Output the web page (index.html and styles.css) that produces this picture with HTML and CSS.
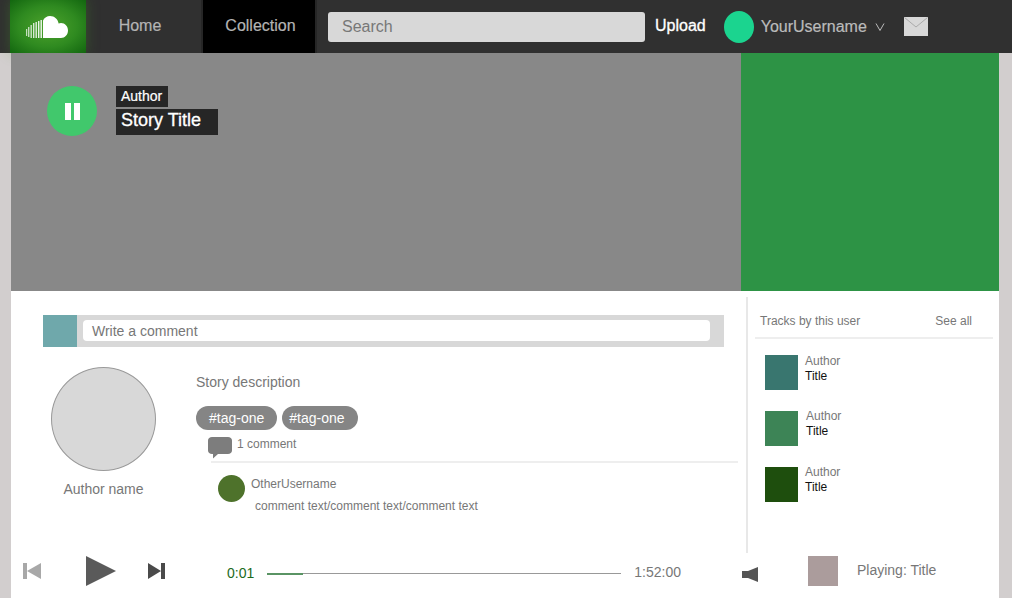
FILE: index.html
```html
<!DOCTYPE html>
<html lang="en">
<head>
    <meta charset="UTF-8">
    <title>Story</title>
    <link rel="stylesheet" href="styles.css">
</head>
<body>
    <nav class="nav">
        <div class="logo">
            <svg width="44" height="24" viewBox="0 0 44 24">
                <g fill="#fff">
                    <rect x="0" y="13" width="1.200" height="7" opacity=".7"/>
                    <rect x="2" y="11" width="1.400" height="10" opacity=".7"/>
                    <rect x="4.500" y="9" width="1.400" height="13" opacity=".75"/>
                    <rect x="7" y="7" width="1.400" height="15" opacity=".8"/>
                    <rect x="9.500" y="6" width="1.400" height="16" opacity=".85"/>
                    <rect x="12" y="5" width="1.400" height="17" opacity=".9"/>
                    <rect x="14.500" y="4" width="1.400" height="18" opacity=".95"/>
                    <path d="M17 22V4.500C18.500 1.500 21 0 24 0c4.500 0 8 3.200 8.600 7.600C33.300 7.200 34.200 7 35 7c3.900 0 7 3.300 7 7.500S38.900 22 35 22z"/>
                </g>
            </svg>
        </div>
        <a class="nav-link nav-home">Home</a>
        <a class="nav-link nav-active">Collection</a>
        <div class="search">Search</div>
        <a class="upload">Upload</a>
        <span class="user-dot"></span>
        <span class="username">YourUsername</span>
        <svg class="chevron" width="10" height="8" viewBox="0 0 10 8"><path d="M1 .5 5 7.500 9 .5" fill="none" stroke="#bbb"/></svg>
        <svg class="mail" width="24" height="19" viewBox="0 0 24 19">
            <rect width="24" height="19" fill="#d8d8d8"/>
            <path d="M.5.500 12 10 23.500.500" fill="none" stroke="#aaa"/>
        </svg>
    </nav>

    <main class="page">
        <section class="hero">
            <div class="hero-main">
                <div class="pause"><span></span><span></span></div>
                <div class="hero-labels">
                    <span class="hero-author">Author</span>
                    <span class="hero-title">Story Title</span>
                </div>
            </div>
            <div class="hero-side"></div>
        </section>

        <section class="content">
            <div class="story">
                <div class="write">
                    <span class="write-pic"></span>
                    <div class="write-input">Write a comment</div>
                </div>
                <div class="story-body">
                    <div class="author">
                        <div class="author-pic"></div>
                        <p class="author-name">Author name</p>
                    </div>
                    <div class="details">
                        <p class="description">Story description</p>
                        <div class="tags">
                            <span class="tag">#tag-one</span>
                            <span class="tag">#tag-one</span>
                        </div>
                        <div class="count">
                            <svg width="24" height="22" viewBox="0 0 24 22">
                                <path d="M4 0h16c2.200 0 4 1.500 4 3.500v10c0 2-1.800 3.500-4 3.500H10l-5 4.500V17H4c-2.200 0-4-1.500-4-3.500v-10C0 1.500 1.800 0 4 0z" fill="#7d7d7d"/>
                            </svg>
                            <span>1 comment</span>
                        </div>
                        <div class="comment">
                            <span class="comment-pic"></span>
                            <div>
                                <p class="comment-user">OtherUsername</p>
                                <p class="comment-text">comment text/comment text/comment text</p>
                            </div>
                        </div>
                    </div>
                </div>
            </div>

            <aside class="side">
                <div class="side-head">
                    <span>Tracks by this user</span>
                    <span>See all</span>
                </div>
                <div class="track">
                    <span class="cover cover-a"></span>
                    <div><p class="track-author">Author</p><p class="track-title">Title</p></div>
                </div>
                <div class="track track-wide">
                    <span class="cover cover-b"></span>
                    <div><p class="track-author">Author</p><p class="track-title">Title</p></div>
                </div>
                <div class="track">
                    <span class="cover cover-c"></span>
                    <div><p class="track-author">Author</p><p class="track-title">Title</p></div>
                </div>
            </aside>
        </section>

        <footer class="player">
            <svg class="prev" width="18" height="16" viewBox="0 0 18 16"><path d="M0 0h4v16H0zM4 8l14-8v16z" fill="#a8a8a8"/></svg>
            <svg class="play" width="30" height="30" viewBox="0 0 30 30"><path d="M0 0l30 15L0 30z" fill="#5a5a5a"/></svg>
            <svg class="next" width="17" height="16" viewBox="0 0 17 16"><path d="M0 0l13 8-13 8zM13 0h4v16h-4z" fill="#4a4a4a"/></svg>
            <span class="time-now">0:01</span>
            <div class="bar"><div class="bar-done"></div></div>
            <span class="time-all">1:52:00</span>
            <svg class="speaker" width="16" height="15" viewBox="0 0 16 15"><path d="M0 4h6l10-4v15L6 11H0z" fill="#555"/></svg>
            <span class="now-pic"></span>
            <span class="now-title">Playing: Title</span>
        </footer>
    </main>
</body>
</html>
```

FILE: styles.css
```css
*{
    box-sizing: border-box;
}
html, body{
    height: 598px;
    overflow: hidden;
}
body{
    margin: 0;
    background: #d2cece;
    font-family: "Liberation Sans", Arial, sans-serif;
    color: #777;
}
p{
    margin: 0;
}

.nav{
    height: 53px;
    background: #303030;
    display: flex;
    align-items: center;
    padding-left: 10px;
}
.logo{
    width: 76px;
    height: 53px;
    background: radial-gradient(ellipse at center, #4da32c 0%, #2f8a20 55%, #12660f 100%);
    box-shadow: 0 0 12px rgba(70, 150, 40, .35);
    display: flex;
    align-items: center;
    padding: 3px 0 0 16px;
}
.nav-link{
    height: 53px;
    line-height: 51px;
    font-size: 16px;
    color: #b4b4b4;
    text-align: center;
    -webkit-text-stroke: .2px #b4b4b4;
}
.nav-home{
    width: 107px;
    margin-right: 10px;
    padding-left: 1px;
}
.nav-active{
    width: 112px;
    padding-left: 3px;
    background: #000;
    box-shadow: -2px 0 0 #262626, 2px 0 0 #262626;
}
.search{
    width: 317px;
    height: 30px;
    margin-left: 13px;
    padding-left: 14px;
    background: #d8d8d8;
    border-radius: 3px;
    color: #777;
    font-size: 16px;
    line-height: 30px;
}
.upload{
    margin: -2px 0 0 10px;
    color: #fff;
    font-size: 16px;
    -webkit-text-stroke: .3px #fff;
}
.user-dot{
    width: 30px;
    height: 32px;
    margin-left: 18px;
    border-radius: 50%;
    background: #1bd48f;
}
.username{
    margin-left: 7px;
    font-size: 16px;
    color: #bbb;
    -webkit-text-stroke: .2px #bbb;
}
.chevron{
    margin-left: 8px;
}
.mail{
    margin-left: 19px;
}

.page{
    width: 988px;
    margin-left: 11px;
    height: 545px;
    background: #fff;
    display: flex;
    flex-direction: column;
}

.hero{
    height: 238px;
    display: flex;
}
.hero-main{
    width: 730px;
    background: #888;
    padding: 33px 0 0 36px;
    display: flex;
    align-items: flex-start;
}
.hero-side{
    width: 258px;
    background: #2d9345;
}
.pause{
    width: 50px;
    height: 50px;
    border-radius: 50%;
    background: #41c86c;
    display: flex;
    justify-content: center;
    align-items: center;
    gap: 3px;
}
.pause span{
    width: 6px;
    height: 17px;
    background: #fff;
}
.hero-labels{
    margin-left: 19px;
    display: flex;
    flex-direction: column;
    align-items: flex-start;
    gap: 2px;
}
.hero-author{
    width: 52px;
    height: 21px;
    padding-left: 5px;
    background: #262626;
    color: #fff;
    font-size: 14px;
    line-height: 20px;
    -webkit-text-stroke: .2px #fff;
}
.hero-title{
    width: 102px;
    height: 26px;
    padding-left: 5px;
    background: #262626;
    color: #fff;
    font-size: 18px;
    line-height: 22px;
    -webkit-text-stroke: .3px #fff;
}

.content{
    height: 262px;
    display: flex;
}
.story{
    width: 735px;
    padding: 24px 0 0 32px;
}
.write{
    width: 681px;
    height: 32px;
    background: #d8d8d8;
    display: flex;
    align-items: flex-start;
}
.write-pic{
    width: 34px;
    height: 32px;
    background: #6fa8ab;
}
.write-input{
    width: 627px;
    height: 21px;
    margin: 5px 0 0 6px;
    padding-left: 9px;
    background: #fff;
    border-radius: 4px;
    color: #777;
    font-size: 14px;
    line-height: 23px;
}
.story-body{
    display: flex;
    margin-top: 20px;
}
.author{
    width: 121px;
    padding-left: 8px;
    text-align: center;
    flex-shrink: 0;
}
.author-pic{
    width: 105px;
    height: 104px;
    border-radius: 50%;
    background: #d8d8d8;
    border: 1px solid #999;
}
.author-name{
    width: 105px;
    margin-top: 10px;
    font-size: 14px;
    line-height: 16px;
}
.details{
    margin-left: 32px;
    flex: 1;
}
.description{
    margin-top: 7px;
    font-size: 14px;
    line-height: 16px;
}
.tags{
    display: flex;
    gap: 5px;
    margin-top: 16px;
}
.tag{
    height: 24px;
    padding: 0 13px;
    border-radius: 12px;
    background: #858585;
    color: #fff;
    font-size: 14px;
    line-height: 24px;
}
.tag + .tag{
    padding: 0 13px 0 7px;
}
.count{
    display: flex;
    align-items: flex-start;
    gap: 5px;
    margin: 7px 0 0 12px;
    font-size: 12px;
    line-height: 14px;
}
.comment{
    display: flex;
    width: 527px;
    margin: 2px 0 0 15px;
    padding: 12px 0 0 7px;
    border-top: 2px solid #eee;
}
.comment-pic{
    width: 27px;
    height: 27px;
    border-radius: 50%;
    background: #4e722b;
    flex-shrink: 0;
}
.comment-user{
    margin: 1px 0 0 6px;
    font-size: 12px;
    line-height: 16px;
}
.comment-text{
    margin: 6px 0 0 10px;
    font-size: 12px;
    line-height: 16px;
}

.side{
    height: 256px;
    margin-top: 6px;
    border-left: 2px solid #e8e8e8;
    padding-left: 7px;
    width: 247px;
}
.side-head{
    width: 238px;
    height: 27px;
    margin-top: 15px;
    padding: 1px 21px 0 5px;
    display: flex;
    justify-content: space-between;
    border-bottom: 2px solid #eee;
    font-size: 12px;
    line-height: 16px;
}
.track{
    display: flex;
    height: 35px;
    margin: 0 0 21px 10px;
    gap: 7px;
}
.side-head + .track{
    margin-top: 16px;
}
.track-wide{
    gap: 8px;
}
.cover{
    width: 33px;
    height: 35px;
}
.cover-a{
    background: #39766f;
}
.cover-b{
    background: #3d8456;
}
.cover-c{
    background: #1e4e0d;
}
.track-author{
    margin-top: -1px;
    font-size: 12px;
    line-height: 15px;
}
.track + .track .track-author{
    margin-top: -2px;
}
.track-title{
    font-size: 12px;
    line-height: 15px;
    color: #111;
}

.player{
    height: 45px;
    display: flex;
    align-items: flex-start;
    padding-left: 12px;
    font-size: 14px;
}
.prev{
    margin-top: 10px;
}
.play{
    margin: 3px 0 0 45px;
}
.next{
    margin: 10px 0 0 32px;
}
.time-now{
    margin: 12px 0 0 62px;
    color: #1c6b1c;
    line-height: 16px;
}
.bar{
    width: 354px;
    height: 1px;
    margin: 20px 0 0 13px;
    background: #999;
    position: relative;
}
.bar-done{
    width: 36px;
    height: 2px;
    background: #5a9464;
}
.time-all{
    margin: 11px 0 0 13px;
    line-height: 16px;
}
.speaker{
    margin: 14px 0 0 61px;
}
.now-pic{
    width: 30px;
    height: 30px;
    margin: 3px 0 0 50px;
    background: #ab9c9c;
}
.now-title{
    margin: 9px 0 0 19px;
    line-height: 16px;
}
```
